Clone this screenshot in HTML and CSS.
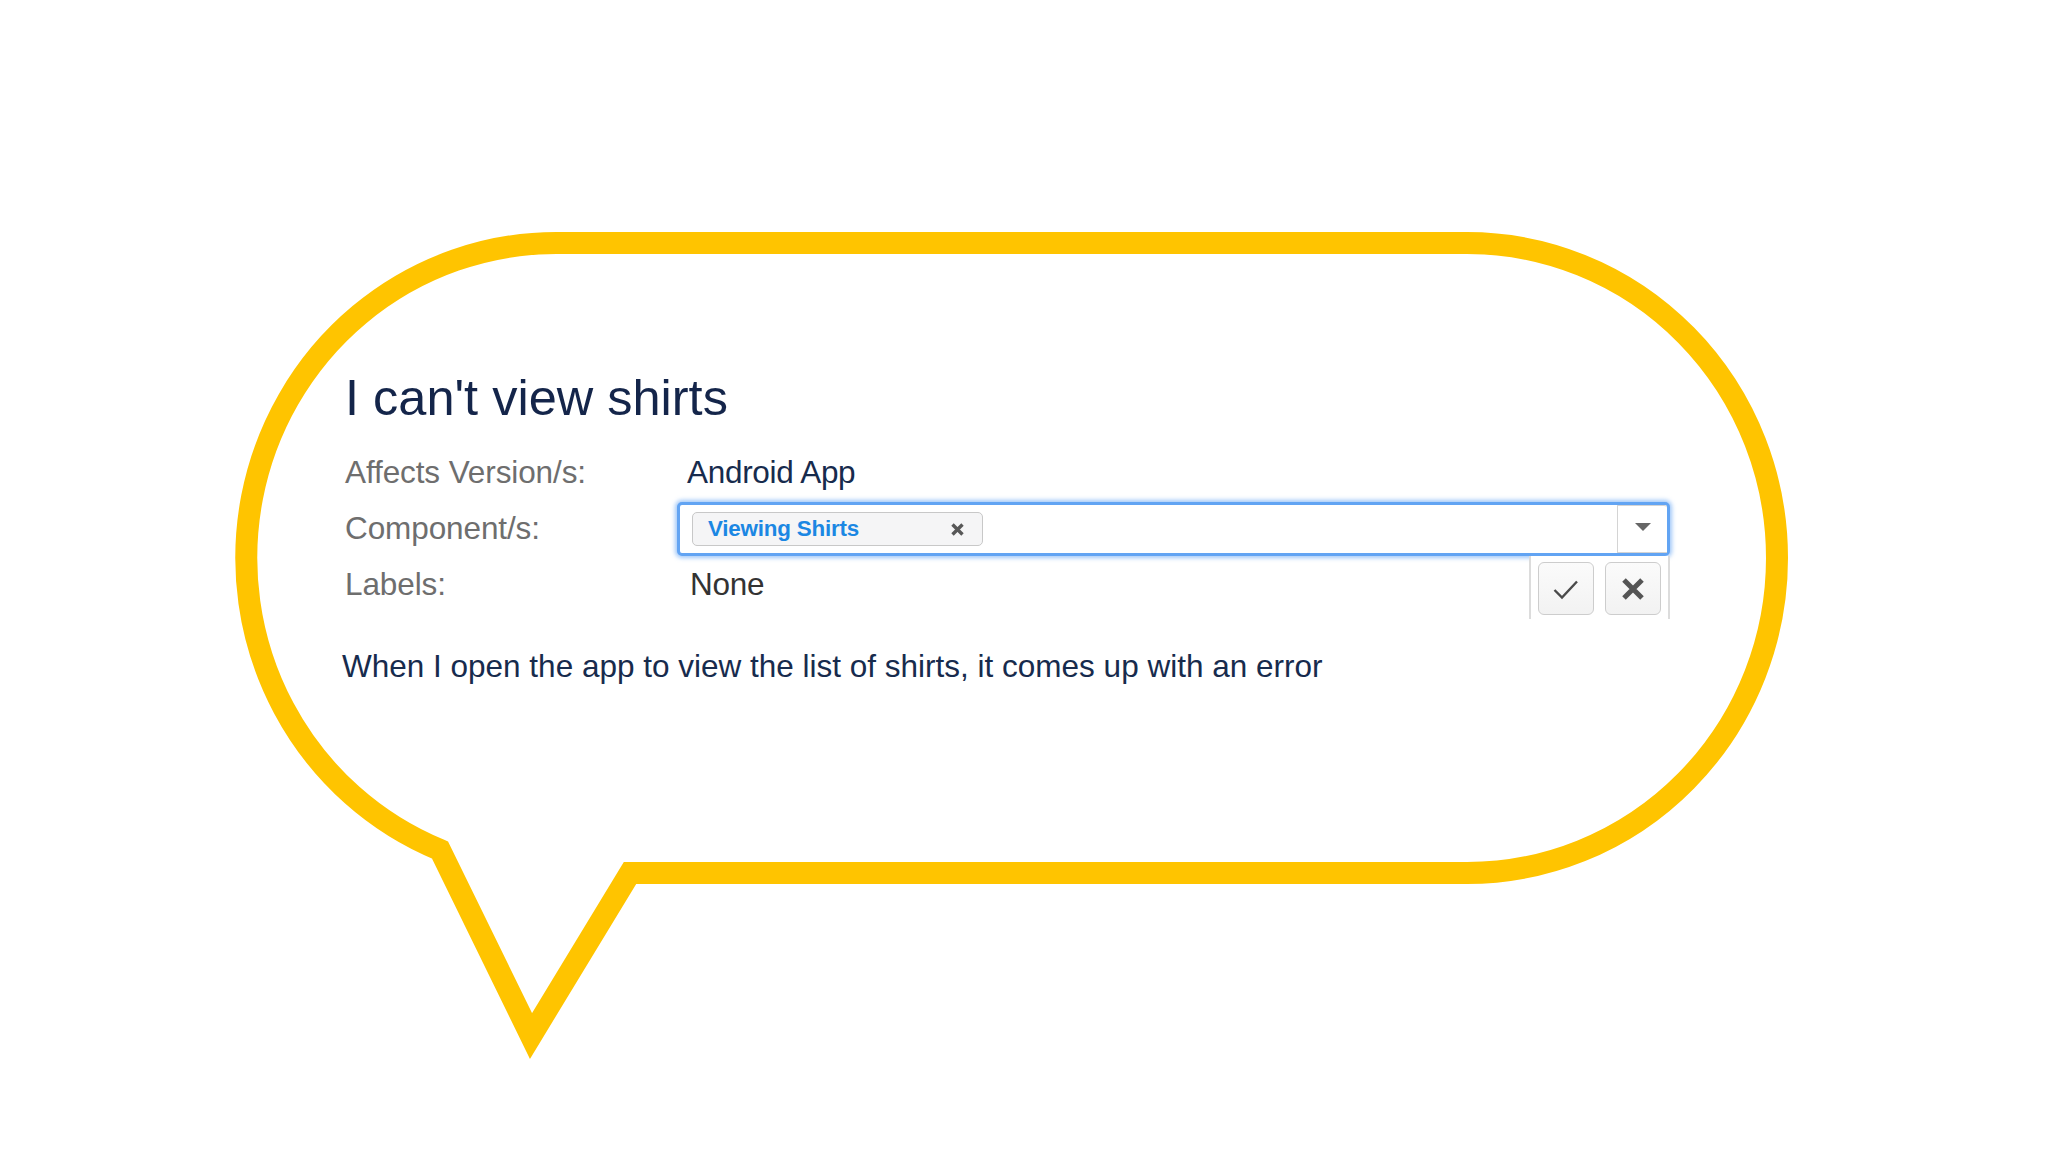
FILE: index.html
```html
<!DOCTYPE html>
<html lang="en">
<head>
<meta charset="utf-8">
<title>I can't view shirts</title>
<link rel="stylesheet" href="styles.css">
</head>
<body>
<div class="canvas">
  <svg class="bubble" width="2048" height="1152" viewBox="0 0 2048 1152" aria-hidden="true">
    <path d="M 557 243 H 1467 A 310 315 0 0 1 1467 873 H 630 L 531 1036 L 440 850 A 310 315 0 0 1 557 243 Z"
          fill="none" stroke="#FFC400" stroke-width="22" stroke-linejoin="miter"/>
  </svg>
  <div class="content">
    <h1 class="title">I can't view shirts</h1>
    <div class="fields">
      <div class="label">Affects Version/s:</div>
      <div class="value">Android App</div>

      <div class="label">Component/s:</div>
      <div class="value editing">
        <div class="select">
          <div class="chips">
            <span class="chip">
              <span class="chip-text">Viewing Shirts</span>
              <svg class="chip-x" width="15" height="15" viewBox="0 0 15 15"><path d="M2.5 2.5 L12.5 12.5 M12.5 2.5 L2.5 12.5" stroke="#585858" stroke-width="3.4"/></svg>
            </span>
          </div>
          <div class="drop">
            <svg width="16" height="8" viewBox="0 0 16 8"><path d="M0 0 H16 L8 8 Z" fill="#666666"/></svg>
          </div>
        </div>
        <div class="actions">
          <button class="btn" type="button" aria-label="Save">
            <svg width="32" height="32" viewBox="0 0 32 32"><path d="M4.5 17 L12 24.5 L27 8.5" fill="none" stroke="#4a4a4a" stroke-width="2.4"/></svg>
          </button>
          <button class="btn" type="button" aria-label="Cancel">
            <svg width="26" height="26" viewBox="0 0 26 26"><path d="M4 4 L22 22 M22 4 L4 22" stroke="#555" stroke-width="5"/></svg>
          </button>
        </div>
      </div>

      <div class="label">Labels:</div>
      <div class="value none">None</div>
    </div>
    <p class="desc">When I open the app to view the list of shirts, it comes up with an error</p>
  </div>
</div>
</body>
</html>
```

FILE: styles.css
```css
* { box-sizing: border-box; }

html, body {
  margin: 0;
  padding: 0;
  background: #ffffff;
}

body {
  font-family: "Liberation Sans", Arial, Helvetica, sans-serif;
  color: #172B4D;
}

.canvas {
  position: relative;
  width: 2048px;
  height: 1152px;
  overflow: hidden;
  background: #ffffff;
}

.bubble {
  position: absolute;
  left: 0;
  top: 0;
}

.content {
  position: relative;
  padding: 368px 0 0 345px;
}

.title {
  margin: 0;
  font-size: 50.5px;
  line-height: 60px;
  font-weight: 400;
  color: #14254a;
}

.fields {
  margin-top: 16px;
  display: grid;
  grid-template-columns: 342px 983px;
  grid-auto-rows: 56px;
  font-size: 31.5px;
  line-height: 56px;
  letter-spacing: -0.3px;
}

.label {
  color: #6e6e6e;
  letter-spacing: -0.1px;
}

.value {
  color: #172B4D;
}

.value.none {
  color: #333333;
  padding-left: 3px;
}

.editing {
  position: relative;
  margin-left: -10px;
}

.select {
  margin-top: 2px;
  height: 54px;
  display: flex;
  align-items: stretch;
  background: #ffffff;
  border: 3px solid #62a4f3;
  border-radius: 5px;
  box-shadow: 0 0 4px 2px rgba(98, 164, 243, 0.6);
}

.chips {
  flex: 1;
  display: flex;
  align-items: center;
  padding-left: 12px;
}

.chip {
  display: flex;
  align-items: center;
  justify-content: space-between;
  width: 291px;
  height: 34px;
  padding: 0 17px 0 15px;
  background: #f5f5f6;
  border: 1px solid #c8c8c8;
  border-radius: 5px;
}

.chip-text {
  font-size: 22.4px;
  line-height: 32px;
  font-weight: 700;
  color: #1b87e3;
  letter-spacing: -0.2px;
}

.chip-x {
  display: block;
}

.drop {
  width: 50px;
  display: flex;
  align-items: center;
  justify-content: center;
  border: 1px solid #d4d4d4;
  border-right: 0;
  border-radius: 0 3px 0 0;
  background: #ffffff;
}

.drop svg {
  display: block;
  margin-top: -4px;
}

.actions {
  position: absolute;
  top: 56px;
  right: 0;
  width: 141px;
  height: 63px;
  display: flex;
  gap: 11px;
  padding: 6px 7px 4px 7px;
  background: #ffffff;
  border-left: 2px solid #dcdcdc;
  border-right: 2px solid #dcdcdc;
}

.btn {
  flex: 1;
  display: flex;
  align-items: center;
  justify-content: center;
  padding: 0;
  margin: 0;
  height: 53px;
  background: linear-gradient(#fbfbfb, #f2f2f2);
  border: 1.5px solid #cdcdcd;
  border-radius: 6px;
}

.btn svg {
  display: block;
}

.desc {
  margin: 34px 0 0 -3px;
  font-size: 31.5px;
  line-height: 40px;
  color: #172B4D;
}
```
